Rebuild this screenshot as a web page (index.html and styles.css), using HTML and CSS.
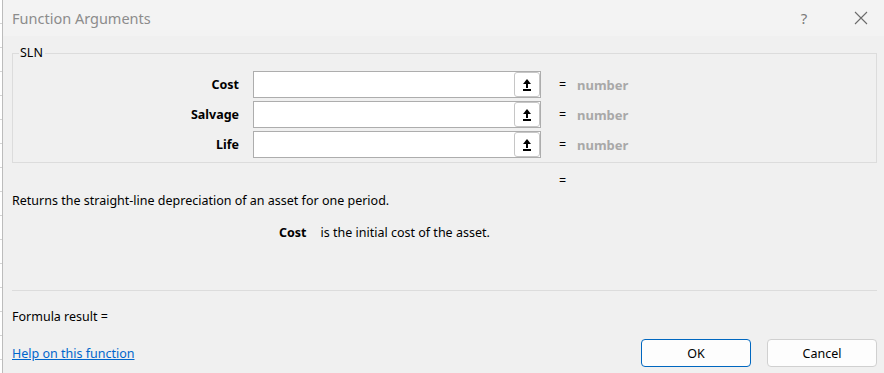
FILE: index.html
```html
<!DOCTYPE html>
<html lang="en">
<head>
    <meta charset="UTF-8">
    <title>Function Arguments</title>
    <link rel="stylesheet" href="styles.css">
</head>
<body>
    <div class="backdrop"></div>
    <div class="dialog">
        <div class="titlebar">
            <span class="title">Function Arguments</span>
            <span class="help-btn">?</span>
            <span class="close-btn">
                <svg width="14" height="14" viewBox="0 0 14 14"><path d="M1 1L13 13M13 1L1 13" stroke="#6b6b6b" stroke-width="1.1" fill="none"/></svg>
            </span>
        </div>

        <div class="content">
            <fieldset class="group">
                <legend>SLN</legend>
                <div class="arg-row">
                    <label>Cost</label>
                    <div class="arg-input"><span class="collapse-btn"><svg width="10" height="13" viewBox="0 0 10 13"><path d="M5 1L1 6H9Z" fill="#000"/><path d="M5 5V10M1 12H9" stroke="#000" stroke-width="2" fill="none"/></svg></span></div>
                    <span class="eq">=</span>
                    <span class="value">number</span>
                </div>
                <div class="arg-row">
                    <label>Salvage</label>
                    <div class="arg-input"><span class="collapse-btn"><svg width="10" height="13" viewBox="0 0 10 13"><path d="M5 1L1 6H9Z" fill="#000"/><path d="M5 5V10M1 12H9" stroke="#000" stroke-width="2" fill="none"/></svg></span></div>
                    <span class="eq">=</span>
                    <span class="value">number</span>
                </div>
                <div class="arg-row">
                    <label>Life</label>
                    <div class="arg-input"><span class="collapse-btn"><svg width="10" height="13" viewBox="0 0 10 13"><path d="M5 1L1 6H9Z" fill="#000"/><path d="M5 5V10M1 12H9" stroke="#000" stroke-width="2" fill="none"/></svg></span></div>
                    <span class="eq">=</span>
                    <span class="value">number</span>
                </div>
            </fieldset>

            <div class="result-eq"><span class="eq">=</span></div>
            <p class="desc">Returns the straight-line depreciation of an asset for one period.</p>
            <p class="arg-desc"><b>Cost</b><span>is the initial cost of the asset.</span></p>

            <div class="separator"></div>
            <p class="formula">Formula result =</p>

            <div class="footer">
                <a href="#" class="help-link">Help on this function</a>
                <div class="buttons">
                    <button class="btn primary">OK</button>
                    <button class="btn">Cancel</button>
                </div>
            </div>
        </div>
    </div>
</body>
</html>
```

FILE: styles.css
```css
body {
    margin: 0;
    width: 884px;
    height: 373px;
    overflow: hidden;
    display: flex;
    background: #fff;
    font-family: 'Noto Sans', 'Open Sans', sans-serif;
    font-size: 12.5px;
    color: #000;
}

.backdrop {
    width: 2px;
    background: repeating-linear-gradient(to bottom, #fff 0, #fff 23px, #d4d4d4 23px, #d4d4d4 24px);
}

.dialog {
    flex: 1;
    background: #f0f0f0;
    border-left: 1px solid #bcbcbc;
    display: flex;
    flex-direction: column;
}

.titlebar {
    height: 36px;
    background: #f3f3f3;
    display: flex;
    align-items: center;
    padding-left: 9px;
}

.title {
    font-size: 14.5px;
    color: #8c8c8c;
    flex: 1;
    margin-top: -1px;
}

.help-btn {
    color: #7a7a7a;
    font-size: 15px;
    width: 56px;
    text-align: center;
    margin-right: 6px;
}

.close-btn {
    width: 46px;
    display: flex;
    justify-content: center;
}

.content {
    padding: 0 7px 0 9px;
}

.group {
    margin: 10px 0 0;
    padding: 11px 0 3px;
    border: 1px solid #dcdcdc;
    height: 101px;
}

.group legend {
    margin-left: 6px;
    padding: 0 2px 0 1px;
    font-size: 12.5px;
    line-height: 14px;
}

.arg-row {
    display: flex;
    align-items: center;
    height: 27px;
    margin-bottom: 3px;
}

.arg-row label {
    width: 226px;
    text-align: right;
    font-weight: bold;
}

.arg-input {
    margin-left: 14px;
    width: 286px;
    height: 25px;
    background: #fff;
    border: 1px solid #adadad;
    display: flex;
    justify-content: flex-end;
    align-items: center;
}

.collapse-btn {
    width: 24px;
    height: 23px;
    border: 1px solid #c6c6c6;
    border-radius: 3px;
    background: #fff;
    display: flex;
    align-items: center;
    justify-content: center;
}

.eq {
    margin-left: 18px;
    width: 16px;
}

.value {
    color: #a8a8a8;
    font-weight: bold;
    font-size: 13px;
    margin-left: 2px;
}

.result-eq {
    height: 34px;
    display: flex;
    align-items: center;
    padding-left: 547px;
}

.result-eq .eq {
    margin-left: 0;
}

.desc {
    margin: -4px 0 0;
    height: 32px;
    line-height: 16px;
}

.arg-desc {
    margin: 0;
    padding-left: 267px;
    line-height: 16px;
    height: 65px;
}

.arg-desc span {
    margin-left: 14px;
}

.separator {
    border-top: 1px solid #dcdcdc;
    height: 18px;
}

.formula {
    margin: 0;
    line-height: 16px;
}

.footer {
    display: flex;
    justify-content: space-between;
    align-items: center;
    margin-top: 14px;
}

.help-link {
    color: #0066cc;
    text-decoration: underline;
}

.buttons {
    display: flex;
    gap: 16px;
}

.btn {
    width: 110px;
    height: 28px;
    background: #fdfdfd;
    border: 1px solid #d0d0d0;
    border-radius: 4px;
    font-family: inherit;
    font-size: 12.5px;
    color: #000;
}

.btn.primary {
    border-color: #0067c0;
}
```
